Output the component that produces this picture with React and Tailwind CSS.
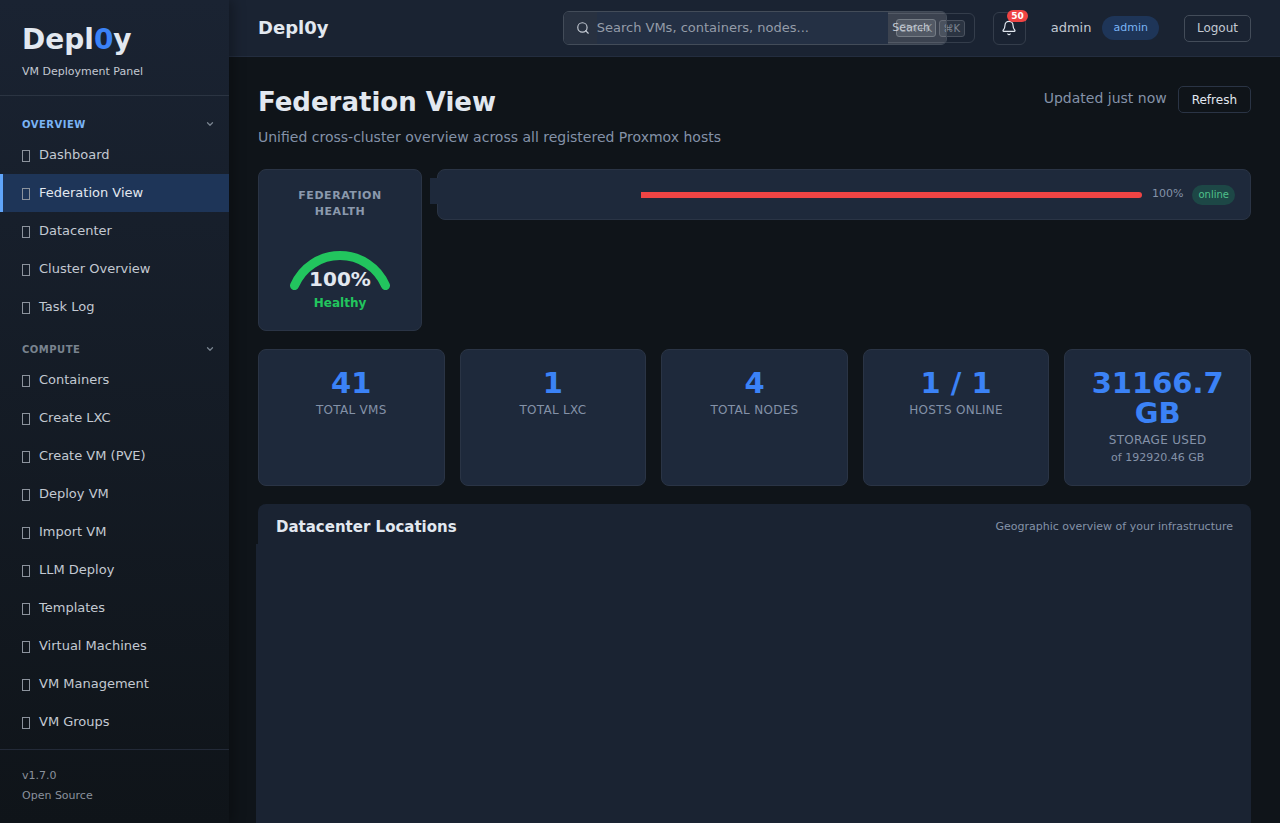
import React, { useState } from 'react';
import { Search, Bell, ChevronDown } from 'lucide-react';

const sections = [
  {
    title: 'Overview',
    items: ['Dashboard', 'Federation View', 'Datacenter', 'Cluster Overview', 'Task Log'],
  },
  {
    title: 'Compute',
    items: [
      'Containers',
      'Create LXC',
      'Create VM (PVE)',
      'Deploy VM',
      'Import VM',
      'LLM Deploy',
      'Templates',
      'Virtual Machines',
      'VM Management',
      'VM Groups',
    ],
  },
];

const stats = [
  { value: '41', label: 'Total VMs' },
  { value: '1', label: 'Total LXC' },
  { value: '4', label: 'Total Nodes' },
  { value: '1 / 1', label: 'Hosts Online' },
  { value: '31166.7 GB', label: 'Storage Used', sub: 'of 192920.46 GB' },
];

const NavSection = ({ section, active, onSelect }) => {
  const [open, setOpen] = useState(true);
  const hasActive = section.items.includes(active);

  return (
    <div className="mb-[11px]">
      <button
        onClick={() => setOpen(!open)}
        aria-expanded={open}
        className={`flex h-6 w-full items-center justify-between pr-[14px] pl-[22px] text-[10px] font-bold tracking-wider uppercase ${
          hasActive ? 'text-[#7ab4f5]' : 'text-[#79838f]'
        }`}
      >
        {section.title}
        <ChevronDown size={10} strokeWidth={3} className="text-[#79838f]" />
      </button>
      {open && (
        <ul>
          {section.items.map((item) => (
            <li key={item}>
              <a
                href="#"
                onClick={() => onSelect(item)}
                className={`flex h-[38px] items-center gap-[9px] border-l-3 pl-[19px] text-[13px] ${
                  item === active
                    ? 'border-[#60a5fa] bg-[#1e3558] text-[#e2e8f0]'
                    : 'border-transparent text-[#c3c9d2]'
                }`}
              >
                <span className="mt-[2px] h-3 w-2 border border-[#8c939d]"></span>
                {item}
              </a>
            </li>
          ))}
        </ul>
      )}
    </div>
  );
};

const Sidebar = () => {
  const [active, setActive] = useState('Federation View');

  return (
    <aside className="relative z-10 flex w-[229px] shrink-0 flex-col bg-gradient-to-b from-[#1a2332] to-[#0f1419] shadow-[4px_0_12px_rgba(0,0,0,0.3)]">
      <div className="h-24 border-b border-[#2b3442] px-[22px] pt-[18px]">
        <div className="text-[28px] leading-[44px] font-bold text-[#e2e8f0]">
          Depl<span className="text-[#3b82f6]">0</span>y
        </div>
        <p className="text-[11px] leading-5 text-[#c3c9d2]">VM Deployment Panel</p>
      </div>
      <nav className="min-h-0 flex-1 overflow-hidden pt-4">
        {sections.map((section) => (
          <NavSection key={section.title} section={section} active={active} onSelect={setActive} />
        ))}
      </nav>
      <div className="border-t border-[#232a38] px-[22px] pt-4 pb-[17px] text-[11px] leading-5 text-[#8a919c]">
        <p>v1.7.0</p>
        <p>Open Source</p>
      </div>
    </aside>
  );
};

const Header = () => (
  <header className="flex h-[57px] shrink-0 items-center border-b border-[#232d3f] bg-[#1a2332] px-[29px]">
    <div className="text-lg font-bold">Depl0y</div>

    <div className="relative ml-auto flex h-[34px] w-[412px] items-center">
      {/* Command palette shortcut sits behind the search form */}
      <button className="absolute right-0 flex h-[30px] items-center gap-[3px] rounded-md border border-[#343d4b] pr-[9px] pl-4 text-[10px] text-[#7d8591]">
        <kbd className="flex h-[18px] w-10 items-center justify-center rounded-[3px] border border-[#5d6570] bg-[#343d4a] font-[inherit]">Ctrl+K</kbd>
        <kbd className="flex h-[17px] w-[26px] items-center justify-center rounded-[3px] border border-[#4a525f] bg-[#2b3442] font-[inherit]">⌘K</kbd>
      </button>
      <form className="relative flex h-full w-96 overflow-hidden rounded-md border border-[#434c59]">
        <label htmlFor="search" className="flex w-[33px] shrink-0 items-center justify-end bg-[#283140] pr-[7px] text-[#c3c9d2]">
          <Search size={14} />
        </label>
        <input
          id="search"
          type="text"
          placeholder="Search VMs, containers, nodes..."
          className="min-w-0 flex-1 bg-[#243044] text-[13px] outline-none placeholder:text-[#949ca8]"
        />
        <button className="w-[58px] bg-white/15 pr-[11px] text-[11px] text-[#c3c9d2]">Search</button>
      </form>
    </div>

    <button aria-label="Notifications" className="relative ml-[18px] flex size-[33px] items-center justify-center rounded-md border border-[#343d4b] text-[#e2e8f0]">
      <Bell size={16} strokeWidth={1.8} />
      <span className="absolute -top-[3px] -right-[3px] rounded-full bg-[#ef4444] px-1 text-[9px] leading-3 font-bold text-white">50</span>
    </button>
    <span className="ml-[25px] text-[13px] text-[#c3c9d2]">admin</span>
    <span className="ml-[11px] rounded-full bg-[#1e3558] px-[11px] text-[11px] leading-6 text-[#7ab4f5]">admin</span>
    <button className="ml-[25px] h-[27px] rounded-[5px] border border-[#434c59] px-3 text-xs text-[#c3c9d2]">Logout</button>
  </header>
);

const HealthCard = () => (
  <div className="flex h-[162px] w-[164px] shrink-0 flex-col items-center rounded-lg border border-[#2a3445] bg-[#1e293b] pt-[18px] text-center">
    <h2 className="px-8 text-[11px] leading-4 font-bold tracking-wider text-[#8b99ad] uppercase">Federation Health</h2>
    <div className="relative mt-[26px] w-[104px]">
      <svg viewBox="0 0 104 44" className="h-11 w-full" fill="none">
        <path d="M6.500 39.500 A49.500 49.500 0 0 1 97.500 39.500" stroke="#22c55e" strokeWidth="9" strokeLinecap="round" />
      </svg>
      <div className="absolute inset-x-0 top-[21px] text-xl leading-6 font-bold">100%</div>
    </div>
    <div className="mt-[5px] text-xs leading-4 font-bold text-[#22c55e]">Healthy</div>
  </div>
);

const HostRow = () => (
  <div className="relative flex h-[51px] flex-1 items-center rounded-lg border border-[#2a3445] bg-[#1e293b] pr-[15px] pl-[203px]">
    <span className="absolute top-[8px] -left-2 h-[26px] w-3 bg-[#1e293b]"></span>
    <div className="h-[6px] flex-1 rounded-r-full bg-[#ef4444]"></div>
    <span className="w-[50px] pr-[9px] text-right text-[11px] text-[#8492a8]">100%</span>
    <span className="rounded-full bg-[#1d4746] px-[6px] text-[10px] leading-5 text-[#4fc08a]">online</span>
  </div>
);

const StatCard = ({ value, label, sub }) => (
  <div className="rounded-lg border border-[#2a3445] bg-[#1e293b] p-[18px] text-center">
    <div className="text-[29px] leading-[30px] font-bold text-[#3b82f6]">{value}</div>
    <div className="mt-[3px] text-xs leading-[18px] tracking-wide text-[#8492a8] uppercase">{label}</div>
    {sub && <div className="text-[11px] leading-[18px] text-[#8492a8]">{sub}</div>}
  </div>
);

const App = () => (
  <div className="flex h-screen overflow-hidden bg-[#0f1419] font-['DejaVu_Sans',sans-serif] text-[#e2e8f0]">
    <Sidebar />
    <div className="flex min-w-0 flex-1 flex-col">
      <Header />
      <main className="flex min-h-0 flex-1 flex-col px-[29px] pt-[29px]">
        <div className="flex items-start justify-between">
          <div>
            <h1 className="text-[26px] leading-8 font-bold">Federation View</h1>
            <p className="mt-[7px] text-sm leading-6 text-[#8492a8]">Unified cross-cluster overview across all registered Proxmox hosts</p>
          </div>
          <div className="flex items-start gap-[11px]">
            <span className="text-sm leading-6 text-[#8492a8]">Updated just now</span>
            <button className="h-[27px] rounded-[5px] border border-[#2a3445] px-[13px] text-xs">Refresh</button>
          </div>
        </div>

        <div className="mt-5 flex items-start gap-[15px]">
          <HealthCard />
          <HostRow />
        </div>

        <div className="mt-[18px] grid grid-cols-5 gap-[15px]">
          {stats.map((stat) => (
            <StatCard key={stat.label} {...stat} />
          ))}
        </div>

        <section className="mt-[18px] flex min-h-0 flex-1 flex-col">
          <div className="flex h-10 shrink-0 items-center justify-between rounded-t-lg bg-[#1a2332] px-[18px] pt-[6px]">
            <h2 className="text-[15px] font-bold">Datacenter Locations</h2>
            <span className="text-[11px] text-[#8492a8]">Geographic overview of your infrastructure</span>
          </div>
          <div className="-ml-[2px] flex-1 bg-[#1a2332]"></div>
        </section>
      </main>
    </div>
  </div>
);

export default App;
